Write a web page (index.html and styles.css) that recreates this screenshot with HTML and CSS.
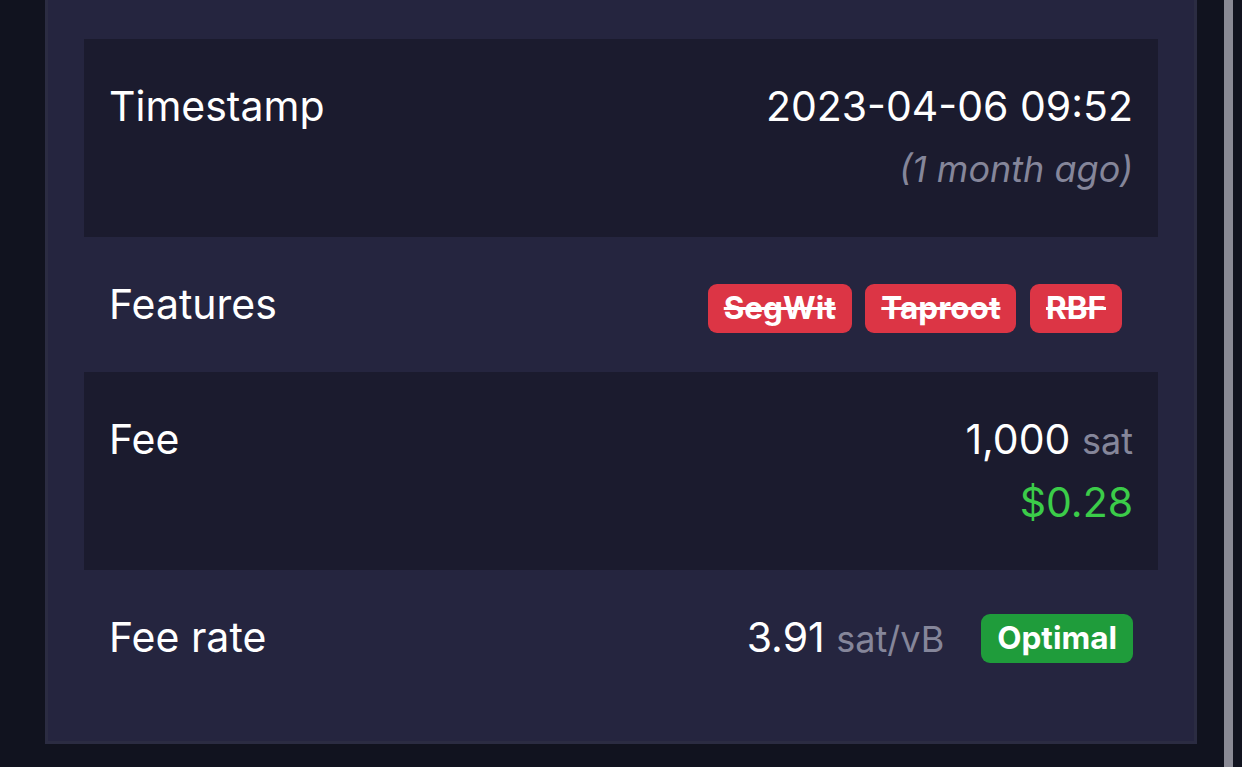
FILE: index.html
```html
<!DOCTYPE html>
<html lang="en">
  <head>
    <meta charset="UTF-8" />
    <meta name="viewport" content="width=device-width, initial-scale=1" />
    <title>Transaction details</title>
    <link rel="stylesheet" href="styles.css">
  </head>
  <body>
    <div class="page">
      <main>
        <div class="box">
          <table class="details">
            <tbody>
              <tr>
                <td class="label">Timestamp</td>
                <td class="value">
                  2023-04-06 09:52
                  <div class="symbol"><i>(1 month ago)</i></div>
                </td>
              </tr>
              <tr>
                <td class="label">Features</td>
                <td class="value">
                  <span class="features">
                    <span class="badge badge-danger">SegWit</span>
                    <span class="badge badge-danger">Taproot</span>
                    <span class="badge badge-danger">RBF</span>
                  </span>
                </td>
              </tr>
              <tr>
                <td class="label">Fee</td>
                <td class="value">
                  1,000 <span class="symbol">sat</span>
                  <div class="fiat">$0.28</div>
                </td>
              </tr>
              <tr>
                <td class="label">Fee rate</td>
                <td class="value">
                  3.91 <span class="symbol">sat/vB</span><span class="badge badge-success">Optimal</span>
                </td>
              </tr>
            </tbody>
          </table>
        </div>
      </main>
      <div class="scrollbar"></div>
    </div>
  </body>
</html>
```

FILE: styles.css
```css
body {
  font-family: Inter, "Noto Sans", sans-serif;
  margin: 0;
  padding: 0;
  background: #11131f;
  color: #fff;
  height: 767px;
  overflow: hidden;
}

.page {
  display: flex;
  height: 767px;
}

main {
  flex: 1;
  padding-left: 45px;
}

.box {
  width: 1074px;
  background: #25253f;
  border: 3px solid #2b2c42;
  border-top: none;
  padding: 39px 36px 36px 36px;
}

.details {
  width: 100%;
  border-collapse: collapse;
  font-size: 41px;
  line-height: 63px;
}

.details td {
  padding: 36px 25px 36px 25px;
  vertical-align: top;
}

.details tr:nth-child(odd) {
  background: #1b1b2e;
}

.value {
  text-align: right;
}

.symbol {
  color: #85869a;
  font-size: 36px;
}

span.symbol {
  line-height: 1;
}

.fiat {
  color: #3bcc49;
}

.features {
  margin-right: 11px;
}

.badge {
  display: inline-block;
  font-size: 31.5px;
  font-weight: 700;
  line-height: 1;
  padding: 8px 16px 9px;
  border-radius: 9px;
  color: #fff;
}

.badge-danger {
  background: #dc3545;
  text-decoration: line-through;
  margin-left: 2px;
}

.badge-success {
  background: #1f9c3b;
  margin-left: 37px;
  vertical-align: 3px;
}

.scrollbar {
  width: 9px;
  height: 767px;
  background: #8a8a95;
  margin-right: 9px;
}
```
